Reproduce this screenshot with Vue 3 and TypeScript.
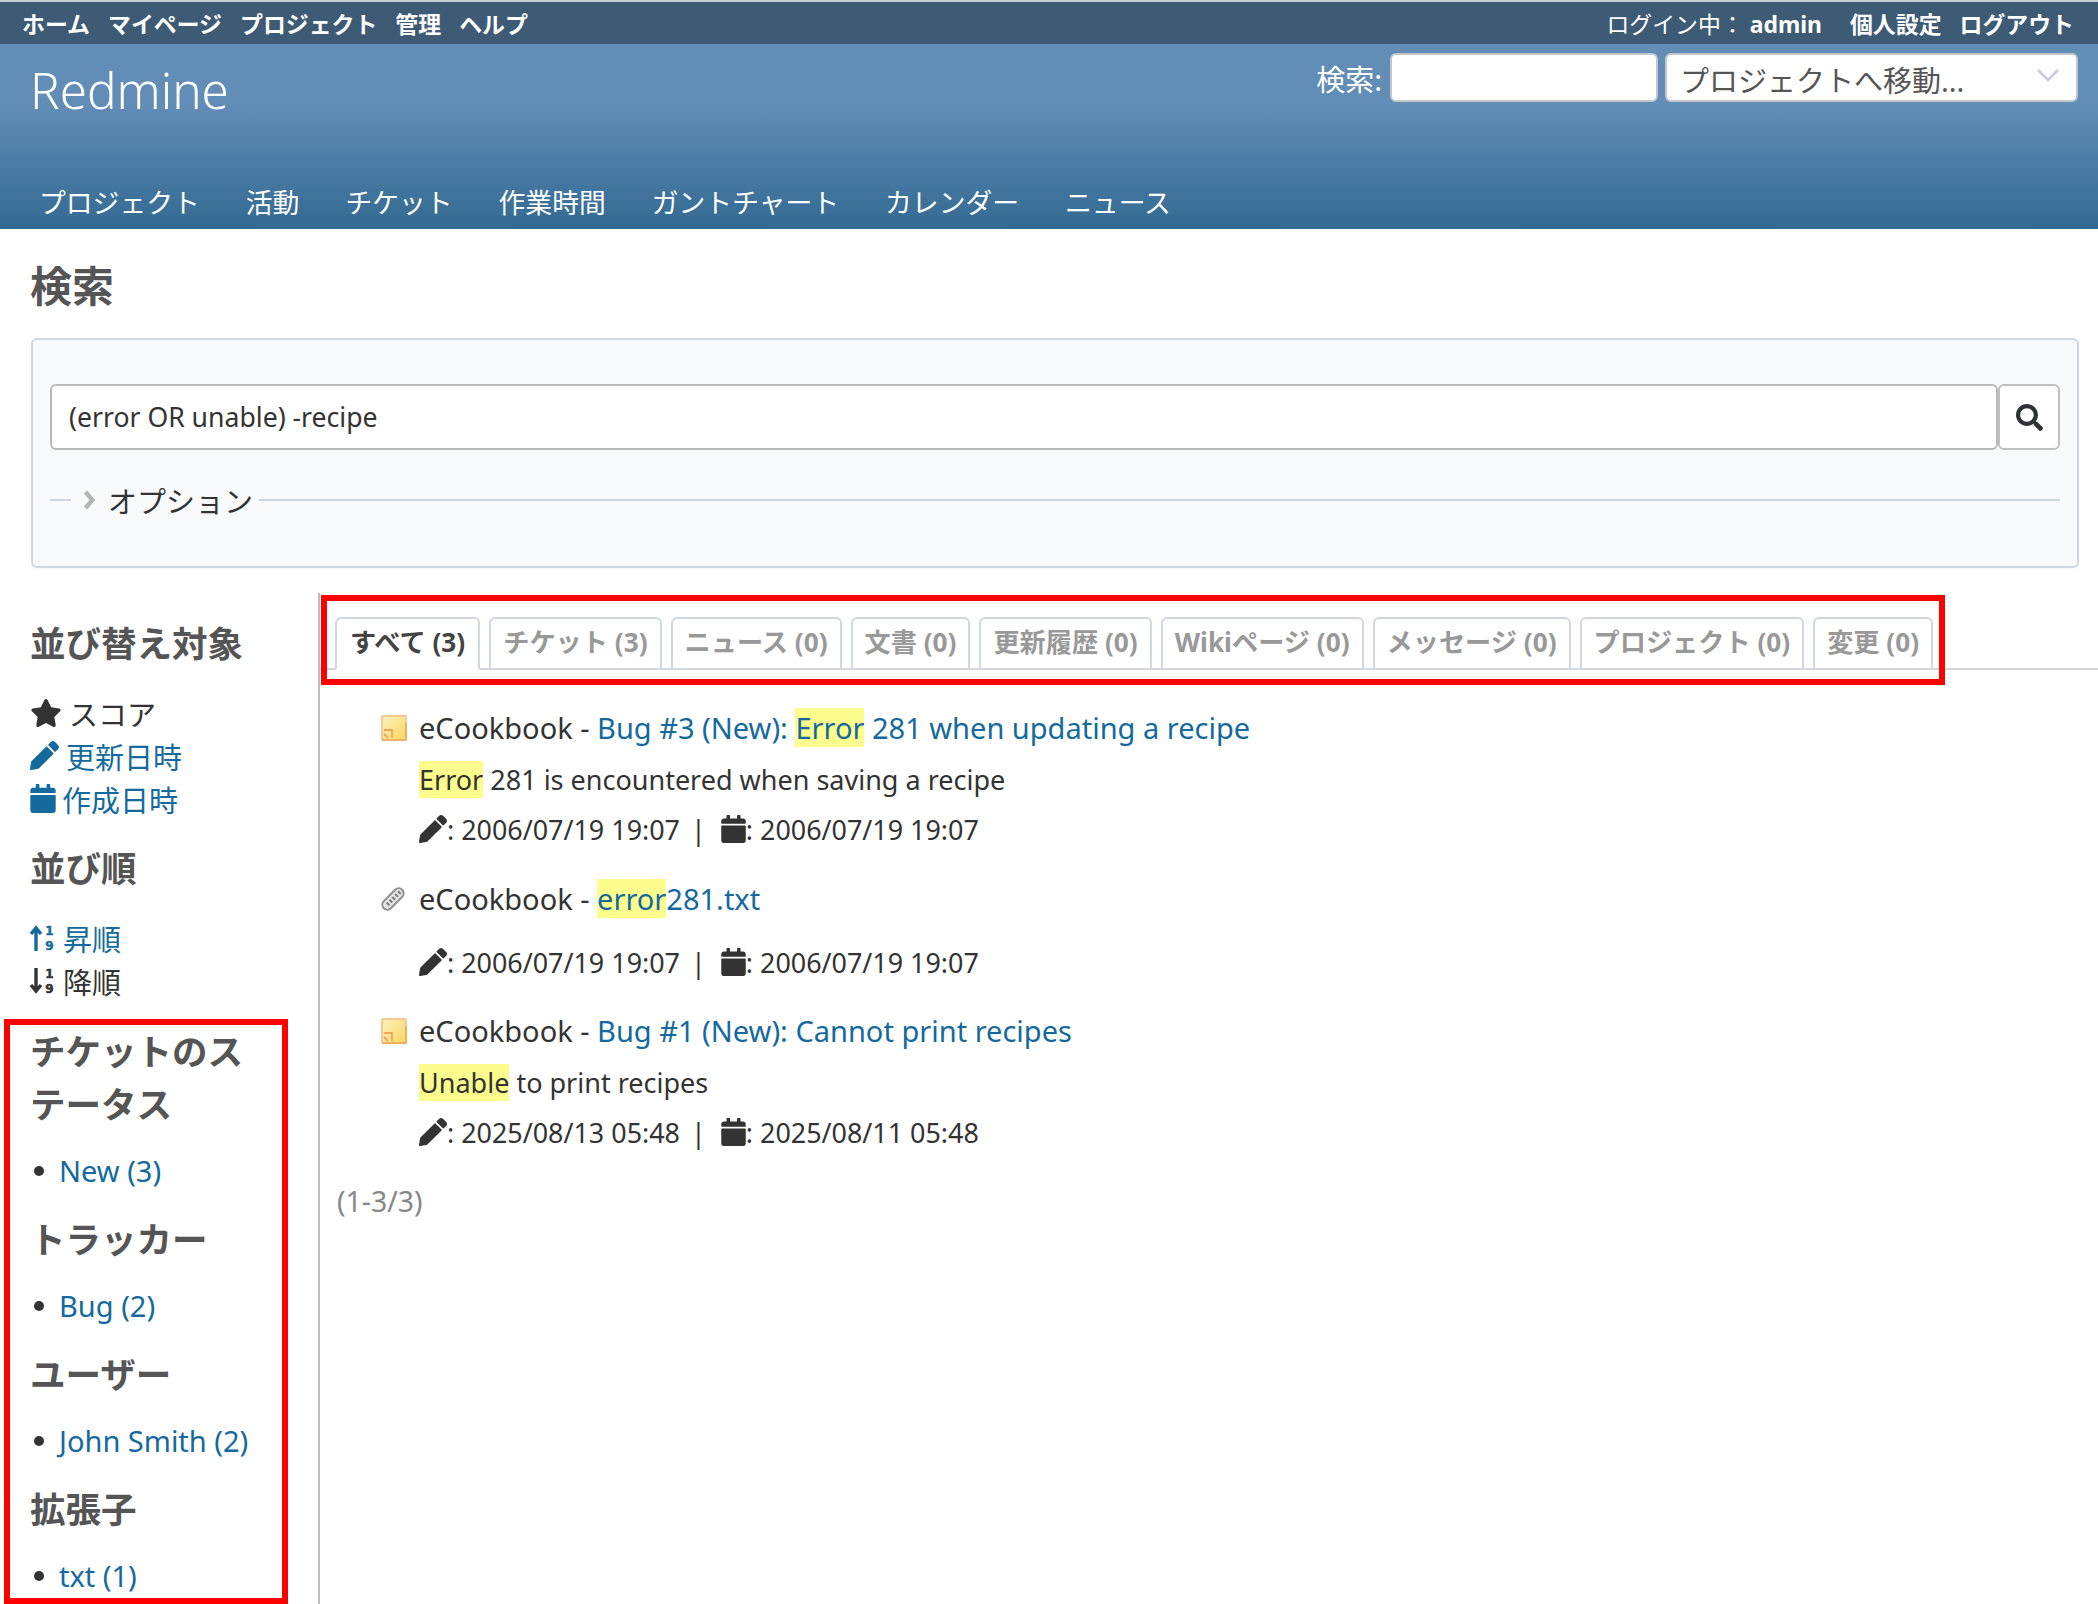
<script setup lang="ts">
const topLeft: string[] = ['ホーム', 'マイページ', 'プロジェクト', '管理', 'ヘルプ']
const menu: string[] = ['プロジェクト', '活動', 'チケット', '作業時間', 'ガントチャート', 'カレンダー', 'ニュース']
const tabs: string[] = ['チケット (3)', 'ニュース (0)', '文書 (0)', '更新履歴 (0)', 'Wikiページ (0)', 'メッセージ (0)', 'プロジェクト (0)', '変更 (0)']
const pencil = 'M497.9 142.1l-46.1 46.1c-4.7 4.7-12.3 4.7-17 0l-111-111c-4.7-4.7-4.7-12.3 0-17l46.1-46.1c18.7-18.7 49.1-18.7 67.9 0l60.1 60.1c18.8 18.7 18.8 49.1 0 67.9zM284.2 99.8L21.6 362.4.4 483.9c-2.9 16.4 11.4 30.6 27.8 27.8l121.5-21.3 262.6-262.6c4.7-4.7 4.7-12.3 0-17l-111-111c-4.8-4.7-12.4-4.7-17.1 0z'
const calendar = 'M12 192h424c6.6 0 12 5.4 12 12v260c0 26.5-21.5 48-48 48H48c-26.5 0-48-21.5-48-48V204c0-6.6 5.4-12 12-12zm436-44v-36c0-26.5-21.5-48-48-48h-48V12c0-6.6-5.4-12-12-12h-40c-6.6 0-12 5.4-12 12v52H160V12c0-6.6-5.4-12-12-12h-40c-6.6 0-12 5.4-12 12v52H48C21.5 64 0 85.5 0 112v36c0 6.6 5.4 12 12 12h424c6.6 0 12-5.4 12-12z'
const star = 'M259.3 17.8L194 150.2 47.9 171.5c-26.2 3.8-36.7 36.1-17.7 54.6l105.7 103-25 145.5c-4.5 26.3 23.2 46 46.4 33.7L288 439.6l130.7 68.7c23.2 12.2 50.9-7.4 46.4-33.7l-25-145.5 105.7-103c19-18.5 8.5-50.8-17.7-54.6L382 150.2 316.7 17.8c-11.7-23.6-45.6-23.9-57.4 0z'
const search = 'M505 442.7L405.3 343c-4.5-4.5-10.6-7-17-7H372c27.6-35.3 44-79.7 44-128C416 93.1 322.9 0 208 0S0 93.1 0 208s93.1 208 208 208c48.3 0 92.7-16.4 128-44v16.3c0 6.4 2.5 12.5 7 17l99.7 99.7c9.4 9.4 24.6 9.4 33.9 0l28.3-28.3c9.4-9.4 9.4-24.6.1-34zM208 336c-70.7 0-128-57.2-128-128 0-70.7 57.2-128 128-128 70.7 0 128 57.2 128 128 0 70.7-57.2 128-128 128z'
</script>

<template>
  <div class="page">
    <div class="topbar">
      <div class="top-left">
        <span v-for="t in topLeft" :key="t">{{ t }}</span>
      </div>
      <div class="top-right">
        <span class="login">ログイン中： <b>admin</b></span>
        <span class="strong">個人設定</span>
        <span class="strong">ログアウト</span>
      </div>
    </div>
    <header class="header">
      <div class="header-top">
        <h1>Redmine</h1>
        <div class="quick">
          <label>検索:</label>
          <input class="q-input" type="text" />
          <div class="jump">
            <span>プロジェクトへ移動...</span>
            <svg width="24" height="14" viewBox="0 0 24 14"><path d="M2 2l10 10L22 2" fill="none" stroke="#c9cbdc" stroke-width="2.5" /></svg>
          </div>
        </div>
      </div>
      <nav class="menu">
        <span v-for="m in menu" :key="m">{{ m }}</span>
      </nav>
    </header>

    <div class="content-head">
      <h2>検索</h2>
      <div class="box">
        <div class="search-row">
          <input class="s-input" type="text" value="(error OR unable) -recipe" />
          <button class="s-btn" type="button">
            <svg width="27" height="27" viewBox="0 0 512 512"><path :d="search" fill="#2f3337" /></svg>
          </button>
        </div>
        <div class="legend">
          <span class="dash"></span>
          <svg class="chev" width="13" height="20" viewBox="0 0 13 20"><path d="M2.5 2l7 8-7 8" fill="none" stroke="#b5b5b5" stroke-width="4.4" /></svg>
          <span class="legend-text">オプション</span>
          <span class="rule"></span>
        </div>
      </div>
    </div>

    <div class="columns">
      <aside class="sidebar">
        <h3 class="first">並び替え対象</h3>
        <div class="sort-list">
          <div class="sort-item dark">
            <svg class="star" viewBox="0 0 576 512"><path :d="star" fill="currentColor" /></svg>
            <span>スコア</span>
          </div>
          <div class="sort-item link">
            <svg class="pen" viewBox="0 0 512 512"><path :d="pencil" fill="currentColor" /></svg>
            <span>更新日時</span>
          </div>
          <div class="sort-item link">
            <svg class="cal" viewBox="0 0 448 512"><path :d="calendar" fill="currentColor" /></svg>
            <span>作成日時</span>
          </div>
        </div>
        <h3 class="order">並び順</h3>
        <div class="sort-list">
          <div class="sort-item link">
            <svg class="num" viewBox="0 0 26 28">
              <path d="M6 27V5M1 10l5-6 5 6" fill="none" stroke="currentColor" stroke-width="3.4" />
              <text x="19.5" y="11" text-anchor="middle" class="numtxt">1</text>
              <text x="19.5" y="26" text-anchor="middle" class="numtxt">9</text>
            </svg>
            <span>昇順</span>
          </div>
          <div class="sort-item dark">
            <svg class="num" viewBox="0 0 26 28">
              <path d="M6 1v22M1 18l5 6 5-6" fill="none" stroke="currentColor" stroke-width="3.4" />
              <text x="19.5" y="11" text-anchor="middle" class="numtxt">1</text>
              <text x="19.5" y="26" text-anchor="middle" class="numtxt">9</text>
            </svg>
            <span>降順</span>
          </div>
        </div>
        <h3 class="wrap">チケットのステータス</h3>
        <ul><li><span class="lnk">New (3)</span></li></ul>
        <h3>トラッカー</h3>
        <ul><li><span class="lnk">Bug (2)</span></li></ul>
        <h3>ユーザー</h3>
        <ul><li><span class="lnk">John Smith (2)</span></li></ul>
        <h3>拡張子</h3>
        <ul><li><span class="lnk">txt (1)</span></li></ul>
      </aside>

      <main class="main">
        <div class="tabs">
          <span class="tab active">すべて (3)</span>
          <span v-for="t in tabs" :key="t" class="tab">{{ t }}</span>
        </div>

        <section class="results">
          <div class="result">
            <div class="rt">
              <span class="ticon">
                <svg class="note" width="26" height="26" viewBox="0 0 26 26">
                  <defs><linearGradient id="note" x1="0" y1="0" x2="1" y2="1"><stop offset="0" stop-color="#fff2c0" /><stop offset="1" stop-color="#f8d662" /></linearGradient></defs>
                  <rect x="1" y="1" width="24" height="24" rx="1" fill="url(#note)" stroke="#f6c896" stroke-width="2" />
                  <path d="M1 25h24V8" fill="none" stroke="#efa858" stroke-width="1.6" />
                  <path d="M3 15h8v8" fill="none" stroke="#eea65a" stroke-width="1.8" />
                  <path d="M3 19l4 4" stroke="#eea65a" stroke-width="1.8" />
                </svg>
              </span>
              <span>eCookbook - <span class="lnk">Bug #3 (New): <mark>Error</mark> 281 when updating a recipe</span></span>
            </div>
            <div class="rd"><mark>Error</mark> 281 is encountered when saving a recipe</div>
            <div class="rm">
              <svg class="m-pen" viewBox="0 0 512 512"><path :d="pencil" fill="currentColor" /></svg><span>: 2006/07/19 19:07</span>
              <span class="sep">|</span>
              <svg class="m-cal" viewBox="0 0 448 512"><path :d="calendar" fill="currentColor" /></svg><span>: 2006/07/19 19:07</span>
            </div>
          </div>

          <div class="result second">
            <div class="rt">
              <span class="ticon">
                <svg class="clip" width="24" height="26" viewBox="0 0 24 26">
                  <g transform="rotate(45 12 13)">
                    <rect x="7" y="0" width="10" height="26" rx="5" fill="#e4e4e4" stroke="#8f8f8f" stroke-width="2" />
                    <path d="M12 3v20" stroke="#7d7d7d" stroke-width="4" stroke-dasharray="2 2" />
                  </g>
                </svg>
              </span>
              <span>eCookbook - <span class="lnk"><mark>error</mark>281.txt</span></span>
            </div>
            <div class="rd empty"></div>
            <div class="rm">
              <svg class="m-pen" viewBox="0 0 512 512"><path :d="pencil" fill="currentColor" /></svg><span>: 2006/07/19 19:07</span>
              <span class="sep">|</span>
              <svg class="m-cal" viewBox="0 0 448 512"><path :d="calendar" fill="currentColor" /></svg><span>: 2006/07/19 19:07</span>
            </div>
          </div>

          <div class="result third">
            <div class="rt">
              <span class="ticon">
                <svg class="note" width="26" height="26" viewBox="0 0 26 26">
                  <rect x="1" y="1" width="24" height="24" rx="1" fill="url(#note)" stroke="#f6c896" stroke-width="2" />
                  <path d="M1 25h24V8" fill="none" stroke="#efa858" stroke-width="1.6" />
                  <path d="M3 15h8v8" fill="none" stroke="#eea65a" stroke-width="1.8" />
                  <path d="M3 19l4 4" stroke="#eea65a" stroke-width="1.8" />
                </svg>
              </span>
              <span>eCookbook - <span class="lnk">Bug #1 (New): Cannot print recipes</span></span>
            </div>
            <div class="rd"><mark>Unable</mark> to print recipes</div>
            <div class="rm">
              <svg class="m-pen" viewBox="0 0 512 512"><path :d="pencil" fill="currentColor" /></svg><span>: 2025/08/13 05:48</span>
              <span class="sep">|</span>
              <svg class="m-cal" viewBox="0 0 448 512"><path :d="calendar" fill="currentColor" /></svg><span>: 2025/08/11 05:48</span>
            </div>
          </div>
        </section>
        <p class="pages">(1-3/3)</p>
      </main>
    </div>

    <div class="mark-box mark-tabs"></div>
    <div class="mark-box mark-side"></div>
  </div>
</template>

<style>
html, body { margin: 0; background: #fff; }
</style>

<style scoped>
.page {
  position: relative;
  width: 2098px;
  height: 1604px;
  overflow: hidden;
  background: #fff;
  font-family: "Noto Sans", "Noto Sans CJK JP", sans-serif;
  font-size: 29px;
  color: #333;
}
.topbar {
  box-sizing: border-box;
  height: 44px;
  border-top: 2px solid #c9cdd1;
  background: #3e5b76;
  color: #fff;
  display: flex;
  justify-content: space-between;
  align-items: center;
  padding: 0 24px 0 22px;
  font-size: 22.9px;
  font-weight: 700;
}
.top-left { display: flex; gap: 18px; }
.top-right { display: flex; gap: 18px; }
.login { font-weight: 400; margin-right: 10px; }
.login b { font-weight: 700; }
.header {
  height: 185px;
  box-sizing: border-box;
  background: linear-gradient(to bottom, #628db6 0%, #628db6 32%, #336a92 100%);
  color: #fff;
  display: flex;
  flex-direction: column;
  justify-content: space-between;
}
.header-top {
  display: flex;
  justify-content: space-between;
  align-items: flex-start;
  padding: 9px 20px 0 30px;
}
h1 {
  margin: 4px 0 0;
  font-size: 49.4px;
  line-height: 66px;
  font-weight: 300;
}
.quick { display: flex; align-items: center; gap: 7px; font-size: 29px; }
.quick label { margin-right: 1px; }
.q-input {
  box-sizing: border-box;
  width: 268px;
  height: 49px;
  border: 2px solid #c3c7cc;
  border-radius: 6px;
  background: #fff;
  margin: 0;
}
.jump {
  box-sizing: border-box;
  width: 413px;
  height: 49px;
  border: 2px solid #c3c7cc;
  border-radius: 6px;
  background: #fff;
  color: #555;
  display: flex;
  align-items: center;
  justify-content: space-between;
  padding: 2px 16px 0 13px;
}
.jump svg { margin-top: -8px; }
.menu {
  display: flex;
  gap: 46px;
  padding: 0 0 8px 39px;
  font-size: 26.8px;
  line-height: 36px;
}
.content-head { padding: 0 19px 0 31px; }
h2 {
  margin: 0 0 0 -1px;
  padding-top: 29px;
  font-size: 42px;
  line-height: 56px;
  font-weight: 700;
  color: #555;
}
.box {
  box-sizing: border-box;
  height: 230px;
  margin-top: 24px;
  background: #f9fafc;
  border: 2px solid #d0d7e1;
  border-radius: 6px;
  padding: 44px 17px 0;
  box-shadow: 0 1px 2px rgba(0, 0, 0, 0.04);
}
.search-row { display: flex; height: 66px; }
.s-input {
  flex: 1;
  box-sizing: border-box;
  height: 66px;
  border: 2px solid #b9b9b9;
  border-radius: 6px;
  background: #fff;
  padding: 0 17px;
  margin: 0;
  font-family: inherit;
  font-size: 26.6px;
  color: #333;
  outline: none;
}
.s-btn {
  box-sizing: border-box;
  width: 62px;
  height: 66px;
  margin: 0;
  border: 2px solid #c0c0c0;
  border-radius: 6px;
  background: #fff;
  padding: 0;
  display: flex;
  align-items: center;
  justify-content: center;
}
.legend { display: flex; align-items: center; margin-top: 31px; height: 38px; }
.dash { width: 21px; height: 2px; background: #d0d7e1; }
.chev { margin: 0 0 0 12px; filter: blur(0.5px); }
.legend-text { margin: 0 6px 0 12px; color: #333; }
.rule { flex: 1; height: 2px; background: #d0d7e1; }
.columns { display: flex; margin-top: 25px; height: 1011px; }
.sidebar {
  box-sizing: border-box;
  width: 318px;
  padding: 0 50px 0 30px;
  flex: none;
}
h3 {
  margin: 0;
  font-size: 35.5px;
  font-weight: 700;
  line-height: 53px;
  color: #555;
  padding-top: 19px;
}
h3.first { padding-top: 24px; }
h3.order { padding-top: 22px; }
h3.wrap { padding-top: 23px; }
.sort-list { padding-top: 21px; }
.sort-item { display: flex; align-items: center; height: 43px; white-space: nowrap; }
.dark { color: #333; }
.link, .lnk { color: #146a9e; }
.star { width: 32px; height: 28px; margin-right: 7px; flex: none; }
.pen { width: 29px; height: 29px; margin-right: 7px; flex: none; }
.cal { width: 26px; height: 29px; margin-right: 6px; flex: none; }
.num { width: 26px; height: 28px; margin-right: 7px; flex: none; overflow: visible; }
.numtxt {
  font-family: "DejaVu Sans", sans-serif;
  font-size: 12px;
  font-weight: 700;
  fill: currentColor;
  stroke: currentColor;
  stroke-width: 0.5px;
}
ul { margin: 0; padding: 17px 0 0 29px; list-style: none; }
li { position: relative; line-height: 46px; white-space: nowrap; }
li::before {
  content: "";
  position: absolute;
  left: -25px;
  top: 18px;
  width: 10px;
  height: 10px;
  border-radius: 50%;
  background: #333;
}
.main {
  flex: 1;
  min-width: 0;
  border-left: 2px solid #bdbdbd;
}
.tabs {
  display: flex;
  gap: 9px;
  align-items: flex-end;
  height: 75px;
  padding-left: 15px;
  border-bottom: 2px solid #d0d7e1;
  box-sizing: content-box;
}
.tab {
  box-sizing: border-box;
  height: 53px;
  margin-bottom: -2px;
  padding: 0 12px;
  border: 2px solid #d0d7e1;
  border-radius: 6px 6px 0 0;
  background: #fff;
  color: #999;
  font-size: 26.2px;
  font-weight: 700;
  line-height: 47px;
  white-space: nowrap;
}
.tab.active { color: #444; border-bottom-color: #fff; z-index: 1; padding: 0 13px; }
.results { padding: 0 0 0 60px; }
.result { position: relative; padding-top: 33px; }
.result.second { padding-top: 20px; }
.result.third { padding-top: 19px; }
.rt { display: flex; line-height: 50px; position: relative; margin-left: 39px; font-size: 29px; }
.ticon { position: absolute; left: -38px; top: 12px; display: flex; }
.note { filter: blur(0.3px); }
.clip { filter: blur(0.4px); }
.rd { margin-left: 39px; line-height: 50px; margin-top: 2px; font-size: 27px; }
.rd.empty { height: 12px; line-height: 12px; }
.rm { margin-left: 39px; margin-top: -1px; display: flex; align-items: center; height: 50px; white-space: pre; font-size: 26.9px; }
.m-pen { width: 28px; height: 28px; color: #333; }
.m-cal { width: 25px; height: 28px; color: #333; }
.sep { margin: 0 15px 0 11px; }
mark { background: #fcfd8d; color: inherit; }
.pages { margin: 0; padding: 19px 0 0 17px; line-height: 50px; color: #888; font-size: 28.4px; }
.mark-box {
  position: absolute;
  box-sizing: border-box;
  border: 6px solid #ff0000;
  pointer-events: none;
}
.mark-tabs { left: 321px; top: 595px; width: 1624px; height: 90px; }
.mark-side { left: 4px; top: 1019px; width: 284px; height: 585px; }
</style>
